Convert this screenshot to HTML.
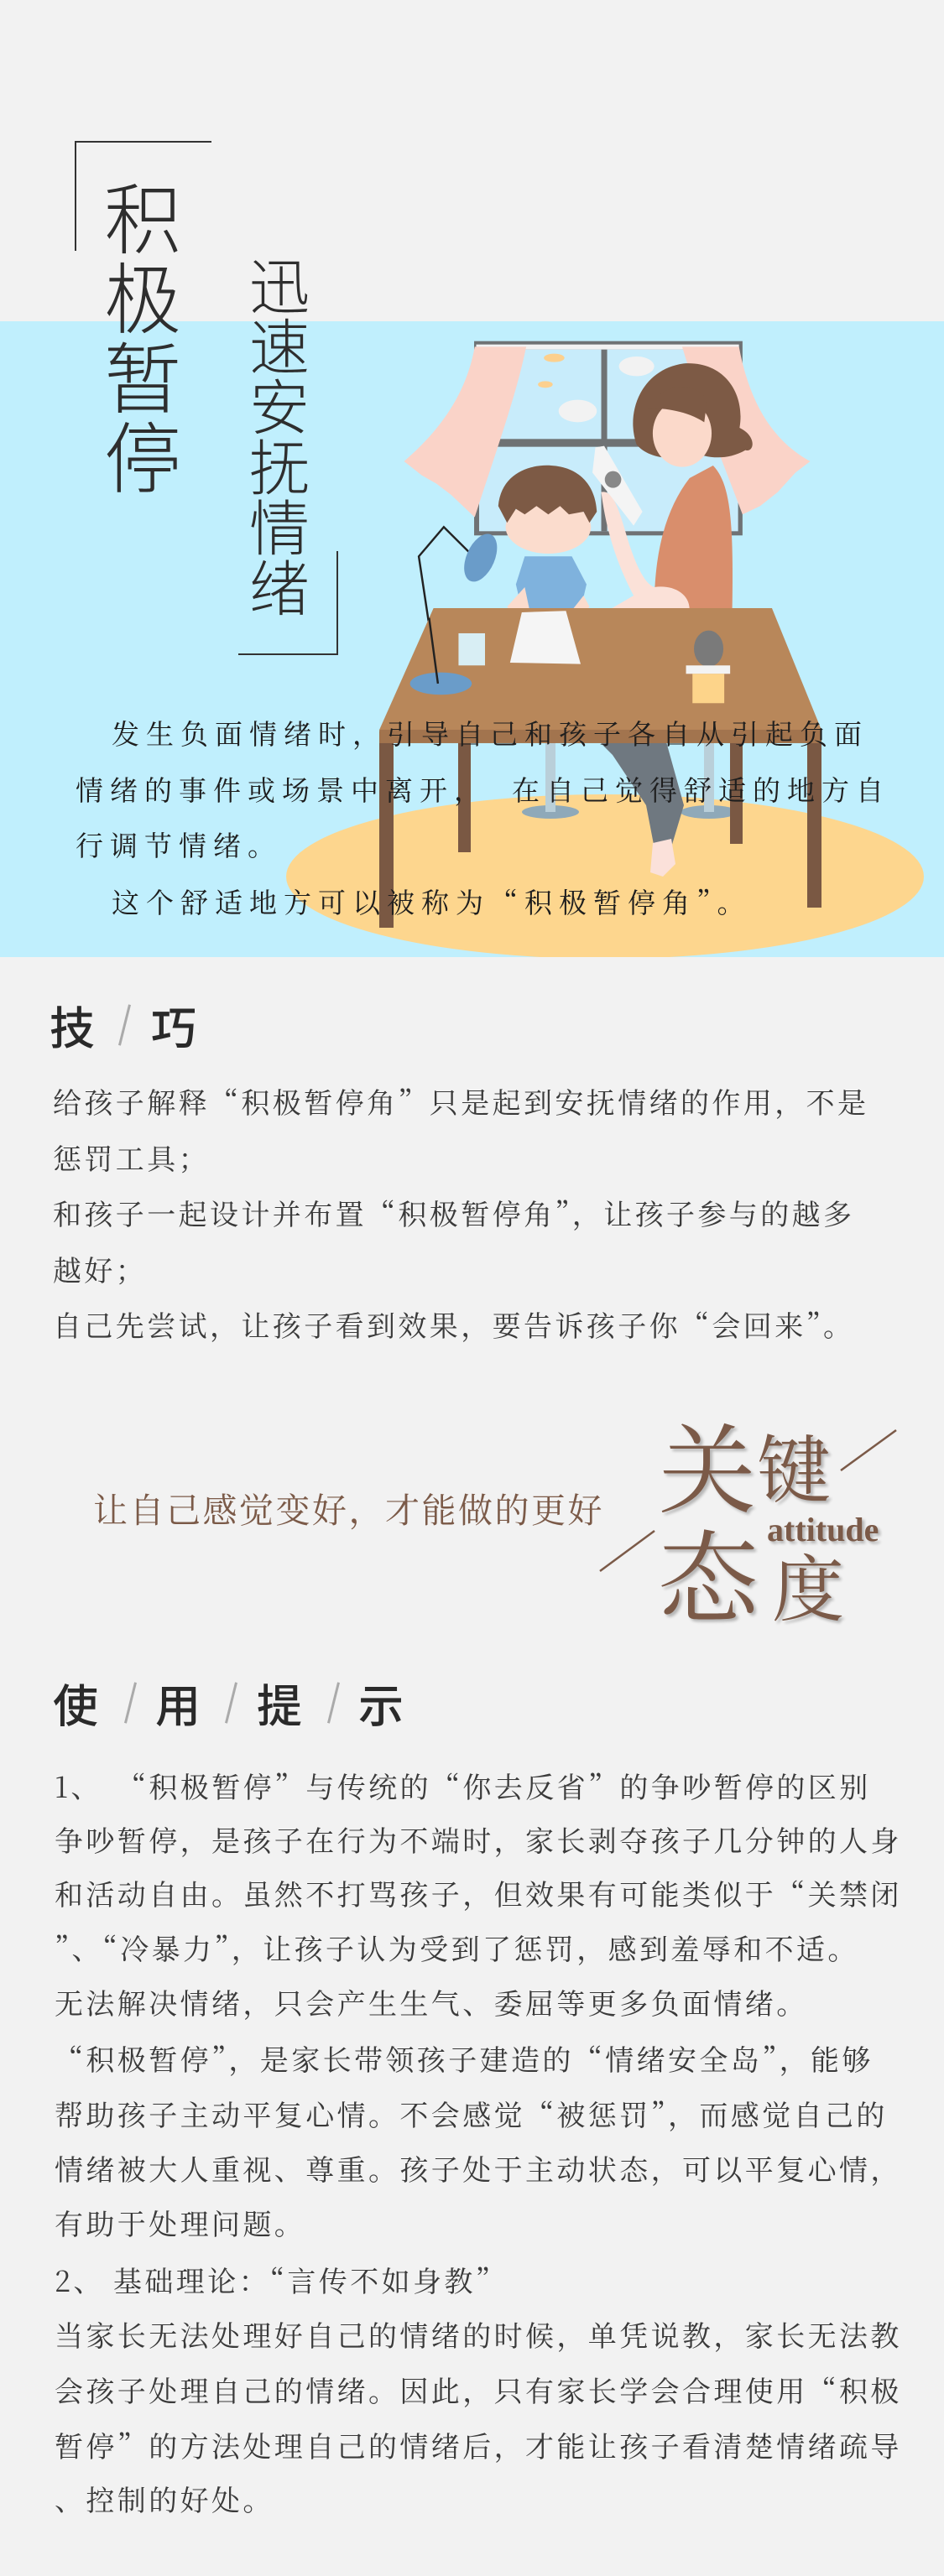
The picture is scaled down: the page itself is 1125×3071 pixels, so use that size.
<!DOCTYPE html>
<html><head><meta charset="utf-8"><style>
*{margin:0;padding:0;box-sizing:border-box}
body{width:1125px;height:3071px;background:#f2f2f2;position:relative;overflow:hidden;font-family:"Noto Serif CJK SC",serif;color:#333}
.a{position:absolute;white-space:nowrap}
.t1{font-family:"Noto Sans CJK SC",sans-serif;font-weight:300;font-size:92px;line-height:95px;color:#2e2e2e;width:100px;text-align:center}
.t2{font-family:"Noto Sans CJK SC",sans-serif;font-weight:300;font-size:72px;line-height:72px;color:#2e2e2e;width:80px;text-align:center}
.p{font-family:"Noto Serif CJK SC",serif;font-size:33px;letter-spacing:8px;color:#1e1e1e;line-height:40px}
.b{font-family:"Noto Serif CJK SC",serif;font-size:34px;letter-spacing:3.4px;color:#3a3a3a;line-height:40px}
.h{font-family:"Noto Sans CJK SC",sans-serif;font-weight:500;font-size:54px;line-height:60px;color:#2a2a2a}
.sl{position:absolute;width:3px;height:50px;background:#aaa;transform:rotate(14deg)}
.k{font-family:"Noto Serif CJK SC",serif;color:#7b5a48;text-shadow:3px 3px 3px rgba(0,0,0,.25)}
</style></head><body>
<div class="a" style="left:0;top:383px;width:1125px;height:758px;background:#c0effd"></div>

<svg class="a" style="left:0;top:0" width="1125" height="1141" viewBox="0 0 1125 1141">
<ellipse cx="721" cy="1045" rx="380" ry="98" fill="#fdd68e"/>
<ellipse cx="656" cy="968" rx="34" ry="8" fill="#8fa9b9"/>
<ellipse cx="845" cy="968" rx="34" ry="8" fill="#8fa9b9"/>
<rect x="650" y="870" width="12" height="98" fill="#b9cfd9"/>
<rect x="839" y="870" width="12" height="98" fill="#b9cfd9"/>
<path d="M700 870 L790 870 L815 960 L800 1010 L780 1012 L770 960 L730 900 Z" fill="#6f7880"/>
<path d="M778 1005 L800 1000 L805 1030 L790 1045 L775 1040 Z" fill="#fbe1da"/>
<rect x="452" y="872" width="17" height="234" fill="#7a5843"/>
<rect x="962" y="872" width="17" height="210" fill="#7a5843"/>
<rect x="546" y="872" width="15" height="144" fill="#7a5843"/>
<rect x="870" y="872" width="15" height="134" fill="#7a5843"/>
<g transform="translate(450,390) scale(0.3507,0.3333)">
<rect x="328" y="50" width="912" height="695" fill="#6f7274"/>
<rect x="345" y="80" width="880" height="650" fill="#c8ecfb"/>
<rect x="335" y="62" width="893" height="18" fill="#f2f2f2"/>
<rect x="760" y="80" width="20" height="650" fill="#6f7274"/>
<rect x="345" y="400" width="880" height="28" fill="#6f7274"/>
<ellipse cx="680" cy="300" rx="65" ry="40" fill="#f2f2f2"/>
<ellipse cx="880" cy="140" rx="60" ry="35" fill="#f2f2f2"/>
<ellipse cx="600" cy="110" rx="35" ry="15" fill="#fcd08e"/>
<ellipse cx="570" cy="205" rx="25" ry="12" fill="#fcd08e"/>
<path d="M330 70 L505 70 C470 250 400 450 330 680 L300 650 L250 600 L200 560 L150 530 L90 480 C200 380 300 250 330 70 Z" fill="#fad3c8"/>
<path d="M1035 70 L1228 70 C1260 250 1330 400 1470 480 L1420 520 L1360 590 L1300 640 L1240 670 C1180 500 1100 300 1035 70 Z" fill="#fad3c8"/>
<path d="M1040 130 C1180 120 1250 240 1230 360 C1290 390 1280 450 1250 440 C1200 470 1150 470 1110 460 C1000 480 920 470 880 420 C840 300 900 150 1040 130 Z" fill="#7d5a45"/>
<ellipse cx="1035" cy="380" rx="100" ry="120" fill="#fbd9ca"/>
<path d="M920 290 C960 200 1080 190 1120 260 L1110 340 C1050 300 980 290 920 290 Z" fill="#7d5a45"/>
<path d="M1060 540 L1140 495 C1200 560 1210 700 1205 1010 L940 1010 C940 800 980 650 1060 540 Z" fill="#d98e6c"/>
<path d="M760 590 C800 580 820 650 850 760 C880 860 910 920 940 930 C1000 920 1060 950 1060 1010 L1000 1020 L800 1040 L720 1100 L680 1130 L740 1040 L870 960 C830 880 780 760 760 590 Z" fill="#fbe1d8"/>
<path d="M740 430 L770 425 L900 660 L870 710 L730 520 Z" fill="#f4f4f4"/>
<ellipse cx="800" cy="545" rx="28" ry="30" fill="#888"/>
<path d="M500 820 L660 820 L710 920 L690 1010 L490 1010 L470 920 Z" fill="#7fb2dd"/>
<path d="M440 1000 L500 930 L520 1030 L470 1050 Z" fill="#fbdccd"/>
<path d="M640 1040 L700 960 L720 1000 L660 1080 Z" fill="#fbdccd"/>
<ellipse cx="580" cy="715" rx="145" ry="95" fill="#fbdccd"/>
<path d="M410 640 C420 520 520 490 590 495 C680 500 740 560 745 660 L720 700 L700 660 L650 670 L620 640 L580 670 L540 640 L500 670 L470 650 L440 700 Z" fill="#7d5a45"/>
<polyline points="205,1275 140,820 225,715 330,825" fill="none" stroke="#222" stroke-width="7"/>
<ellipse cx="350" cy="825" rx="48" ry="90" transform="rotate(22 350 825)" fill="#6a9cc9"/>
<path d="M190 1005 L1340 1005 L1508 1440 L6 1440 Z" fill="#b8875a"/>
<rect x="6" y="1440" width="1502" height="48" fill="#a2744e"/>
<ellipse cx="215" cy="1275" rx="105" ry="40" fill="#6a9cc9"/>
<line x1="205" y1="1275" x2="175" y2="1040" stroke="#222" stroke-width="7"/>
<rect x="275" y="1095" width="90" height="115" fill="#d8eef4"/>
<path d="M490 1020 L640 1015 L690 1205 L450 1200 Z" fill="#f5f5f5"/>
<ellipse cx="1125" cy="1150" rx="50" ry="65" fill="#7a7a7a"/>
<rect x="1048" y="1210" width="150" height="30" fill="#f3f3f3"/>
<rect x="1070" y="1240" width="108" height="105" fill="#fdd48a"/>
</g>
</svg>

<div class="a" style="left:90px;top:168px;width:162px;height:2px;background:#333"></div>
<div class="a" style="left:89px;top:168px;width:2px;height:131px;background:#333"></div>
<div class="a t1" style="left:120px;top:208px">积<br>极<br>暂<br>停</div>
<div class="a t2" style="left:293px;top:301px">迅<br>速<br>安<br>抚<br>情<br>绪</div>
<div class="a" style="left:401px;top:657px;width:2px;height:124px;background:#333"></div>
<div class="a" style="left:284px;top:779px;width:119px;height:2px;background:#333"></div>

<div class="a p" style="left:133px;top:854px">发生负面情绪时，引导自己和孩子各自从引起负面</div>
<div class="a p" style="left:90px;top:921px">情绪的事件或场景中离开，</div>
<div class="a p" style="left:610px;top:921px">在自己觉得舒适的地方自</div>
<div class="a p" style="left:90px;top:987px">行调节情绪。</div>
<div class="a p" style="left:133px;top:1055px">这个舒适地方可以被称为“积极暂停角”。</div>

<div class="a h" style="left:59px;top:1192px">技</div>
<div class="sl" style="left:147px;top:1197px"></div>
<div class="a h" style="left:180px;top:1192px">巧</div>
<div class="a b" style="left:63px;top:1293px">给孩子解释“积极暂停角”只是起到安抚情绪的作用，不是</div>
<div class="a b" style="left:63px;top:1360px">惩罚工具；</div>
<div class="a b" style="left:63px;top:1426px">和孩子一起设计并布置“积极暂停角”，让孩子参与的越多</div>
<div class="a b" style="left:63px;top:1493px">越好；</div>
<div class="a b" style="left:63px;top:1559px">自己先尝试，让孩子看到效果，要告诉孩子你“会回来”。</div>

<div class="a" style="left:111px;top:1774px;font-family:'Noto Serif CJK SC',serif;font-size:41px;letter-spacing:2.5px;color:#7b5a48;line-height:48px">让自己感觉变好，才能做的更好</div>
<div class="a k" style="left:785px;top:1680px;font-size:116px;line-height:130px">关</div>
<div class="a k" style="left:902px;top:1697px;font-size:88px;line-height:100px">键</div>
<div class="a k" style="left:784px;top:1808px;font-size:120px;line-height:130px">态</div>
<div class="a k" style="left:920px;top:1838px;font-size:86px;line-height:100px">度</div>
<div class="a k" style="left:914px;top:1802px;font-family:'Liberation Serif',serif;font-weight:bold;font-size:40px;line-height:44px">attitude</div>
<svg class="a" style="left:0;top:0" width="1125" height="2000"><line x1="1002" y1="1753" x2="1068" y2="1705" stroke="#7b5a48" stroke-width="2.5"/><line x1="715" y1="1873" x2="780" y2="1825" stroke="#7b5a48" stroke-width="2.5"/></svg>

<div class="a h" style="left:63px;top:2000px">使</div>
<div class="sl" style="left:154px;top:2005px"></div>
<div class="a h" style="left:185px;top:2000px">用</div>
<div class="sl" style="left:274px;top:2005px"></div>
<div class="a h" style="left:306px;top:2000px">提</div>
<div class="sl" style="left:396px;top:2005px"></div>
<div class="a h" style="left:427px;top:2000px">示</div>

<div class="a b" style="left:65px;top:2109px">1、</div>
<div class="a b" style="left:140px;top:2109px">“积极暂停”与传统的“你去反省”的争吵暂停的区别</div>
<div class="a b" style="left:65px;top:2173px">争吵暂停，是孩子在行为不端时，家长剥夺孩子几分钟的人身</div>
<div class="a b" style="left:65px;top:2237px">和活动自由。虽然不打骂孩子，但效果有可能类似于“关禁闭</div>
<div class="a b" style="left:65px;top:2302px">”、“冷暴力”，让孩子认为受到了惩罚，感到羞辱和不适。</div>
<div class="a b" style="left:65px;top:2367px">无法解决情绪，只会产生生气、委屈等更多负面情绪。</div>
<div class="a b" style="left:65px;top:2434px">“积极暂停”，是家长带领孩子建造的“情绪安全岛”，能够</div>
<div class="a b" style="left:65px;top:2500px">帮助孩子主动平复心情。不会感觉“被惩罚”，而感觉自己的</div>
<div class="a b" style="left:65px;top:2565px">情绪被大人重视、尊重。孩子处于主动状态，可以平复心情，</div>
<div class="a b" style="left:65px;top:2630px">有助于处理问题。</div>
<div class="a b" style="left:65px;top:2698px">2、</div>
<div class="a b" style="left:135px;top:2698px">基础理论：“言传不如身教”</div>
<div class="a b" style="left:65px;top:2763px">当家长无法处理好自己的情绪的时候，单凭说教，家长无法教</div>
<div class="a b" style="left:65px;top:2829px">会孩子处理自己的情绪。因此，只有家长学会合理使用“积极</div>
<div class="a b" style="left:65px;top:2895px">暂停”的方法处理自己的情绪后，才能让孩子看清楚情绪疏导</div>
<div class="a b" style="left:65px;top:2959px">、控制的好处。</div>
</body></html>
